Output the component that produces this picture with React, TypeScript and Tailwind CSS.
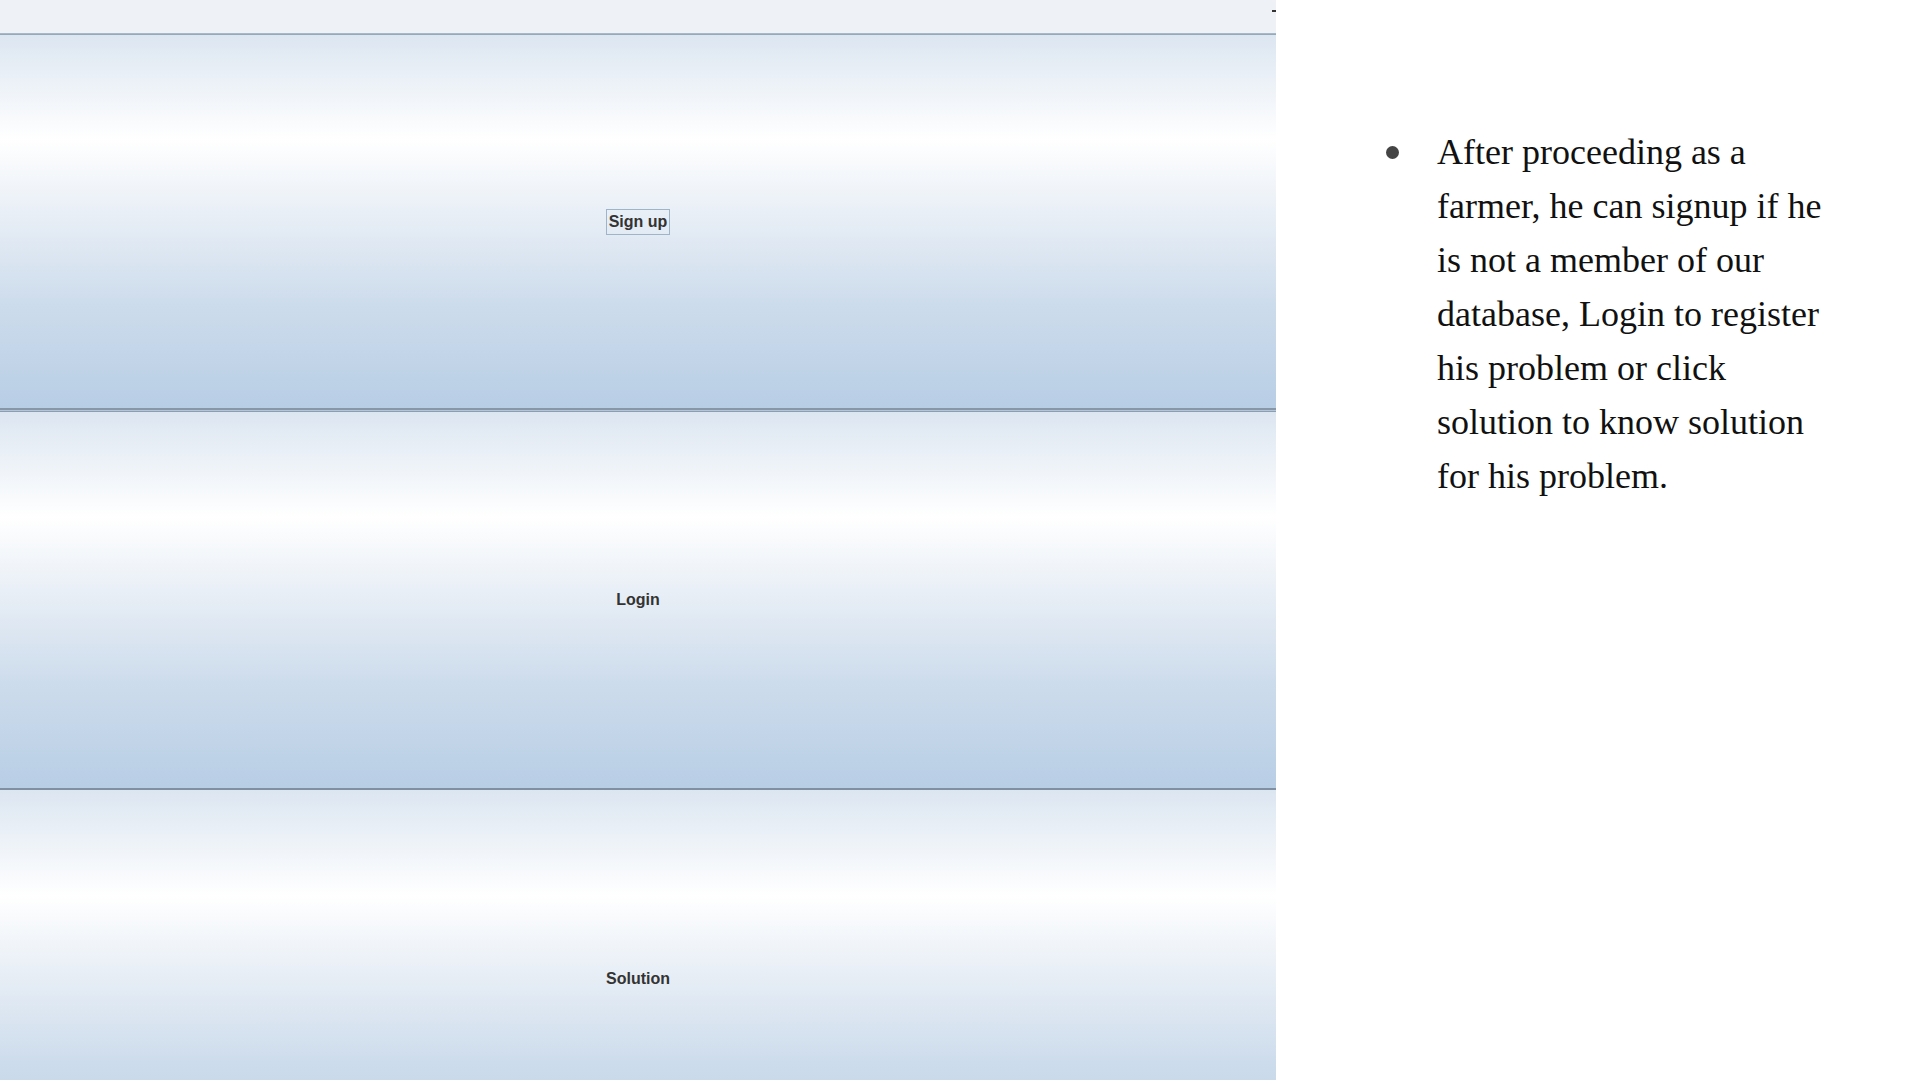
import React from 'react';

const lines = [
  'After proceeding as a',
  'farmer, he can signup if he',
  'is not a member of our',
  'database, Login to register',
  'his problem or click',
  'solution to know solution',
  'for his problem.',
];

const NimbusButton: React.FC<{ label: string; focused?: boolean; className?: string }> = ({
  label,
  focused,
  className = '',
}) => (
  <div
    className={`flex items-center justify-center bg-[linear-gradient(to_bottom,#dce6f1_0%,#ffffff_28%,#e6edf5_50%,#cddcec_72%,#b8cee5_100%)] ${className}`}
  >
    <span
      className={`font-['Liberation_Sans',Arial,sans-serif] text-[16px] font-bold leading-none text-[#333333] ${
        focused ? 'border border-[#9fb3c9] px-[2px] py-[4px]' : ''
      }`}
    >
      {label}
    </span>
  </div>
);

export default function App() {
  return (
    <div className="flex h-[1080px] w-[1920px] overflow-hidden bg-white">
      {/* Swing-style frame */}
      <div className="flex w-[1276px] shrink-0 flex-col overflow-hidden">
        <div className="relative h-[33px] shrink-0 bg-[#eef2f7]">
          <div className="absolute right-0 top-[10px] h-[2px] w-[4px] bg-[#333]" />
        </div>
        <div className="h-[1px] shrink-0 bg-[#a9b8c9]" />
        <div className="h-[1px] shrink-0 bg-[#95a8bc]" />
        <NimbusButton label="Sign up" focused className="h-[373px] shrink-0" />
        <div className="h-[2px] shrink-0 bg-[#8797a8]" />
        <div className="h-[1px] shrink-0 bg-[#b3c5d8]" />
        <div className="h-[1px] shrink-0 bg-[#8e9eb1]" />
        <NimbusButton label="Login" className="h-[376px] shrink-0" />
        <div className="h-[2px] shrink-0 bg-[#808fa1]" />
        <NimbusButton label="Solution" className="h-[378px] shrink-0" />
      </div>

      {/* Slide text */}
      <div className="flex flex-1 pl-[110px] pt-[125px]">
        <div className="pt-[21px]">
          <div className="h-[13px] w-[13px] rounded-full bg-[#444444]" />
        </div>
        <div className="ml-[38px] font-['Liberation_Serif','Times_New_Roman',serif] text-[36px] leading-[54px] text-[#111111]">
          {lines.map((l) => (
            <div key={l} className="whitespace-nowrap">
              {l}
            </div>
          ))}
        </div>
      </div>
    </div>
  );
}
